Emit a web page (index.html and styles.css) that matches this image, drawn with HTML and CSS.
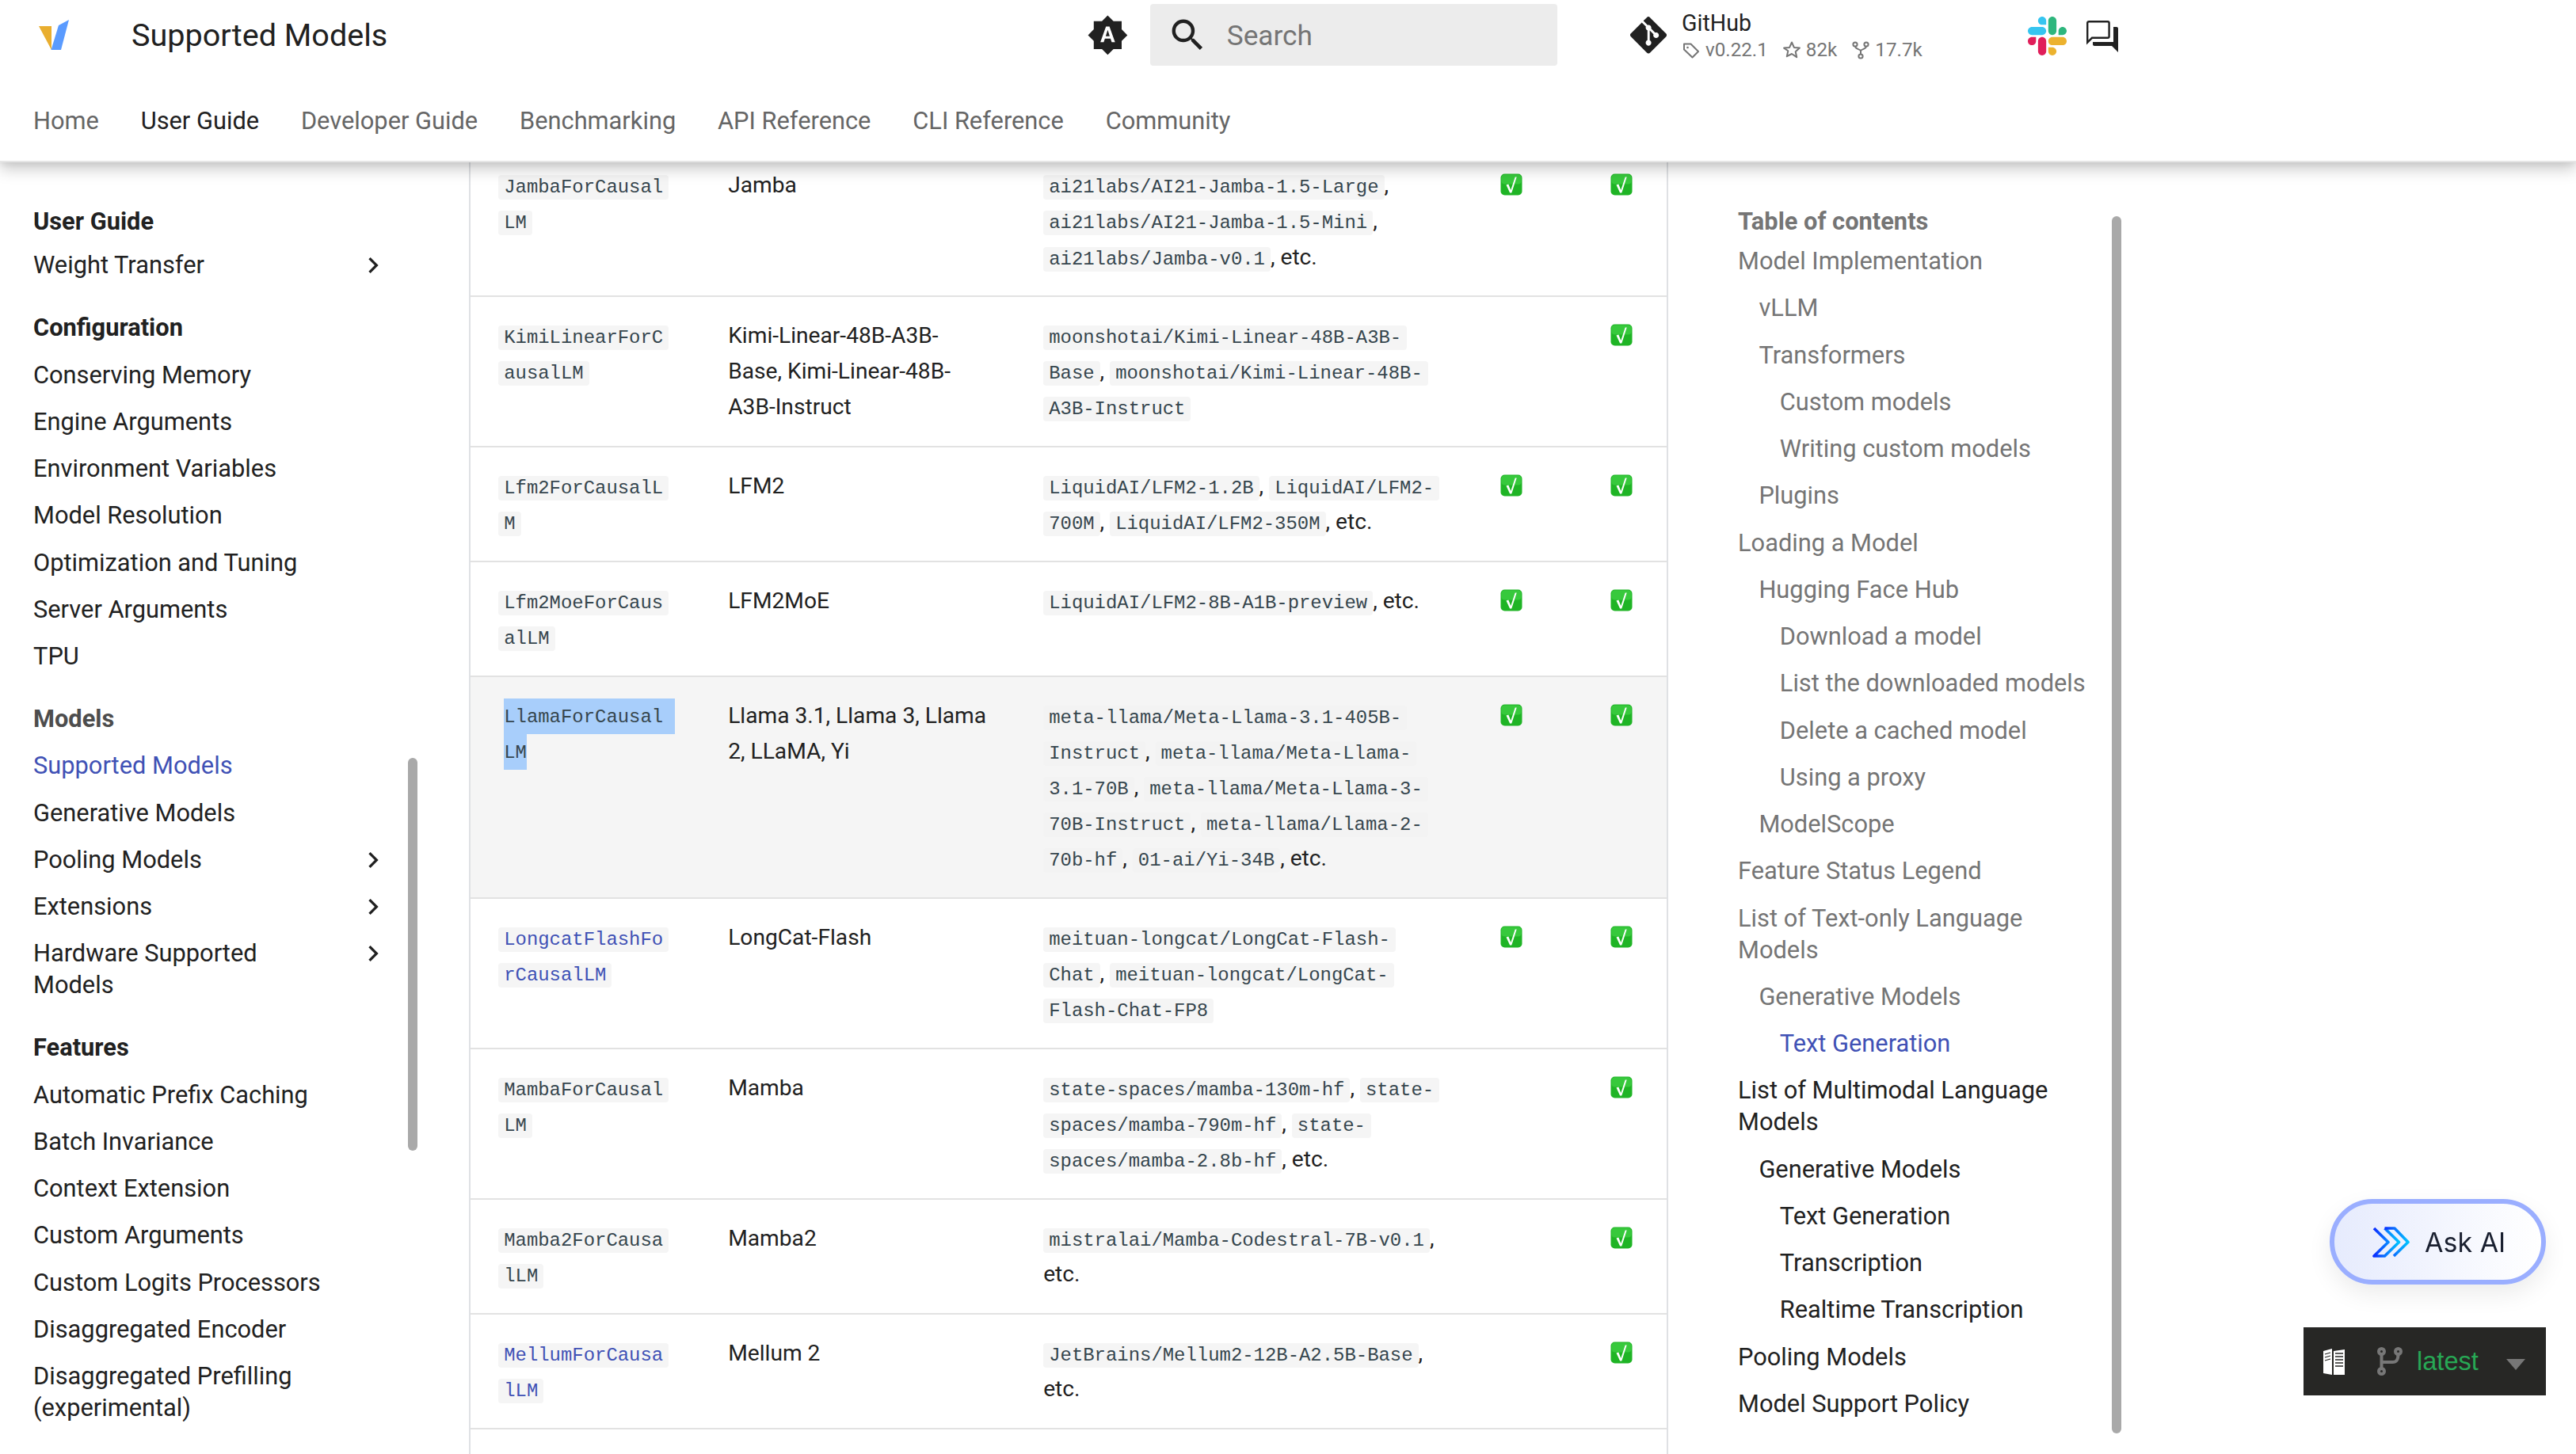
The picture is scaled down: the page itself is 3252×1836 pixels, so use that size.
FILE: index.html
```html
<!DOCTYPE html>
<html lang="en">
<head>
<meta charset="utf-8">
<title>Supported Models</title>
<link rel="stylesheet" href="styles.css">
</head>
<body>
<svg class="defs" aria-hidden="true">
  <symbol id="check" viewBox="0 0 28 28">
    <rect x="0.5" y="0.5" width="27" height="27" rx="5" fill="#1fb425"/>
    <rect x="1.5" y="1.5" width="25" height="12" rx="4" fill="#37c93c"/>
    <path d="M7.500 14.500l2.800-1 3 7.500 5.400-16.500h2l-6.400 20h-2.200z" fill="#fff"/>
  </symbol>
  <symbol id="chev" viewBox="0 0 24 24">
    <path d="M8.600 16.600 13.200 12 8.600 7.400 10 6l6 6-6 6z" fill="#212121"/>
  </symbol>
</svg>

<header class="site-header">
  <div class="bar">
    <svg class="logo" viewBox="42 0 53 88"><polygon points="49,33 65,33 65,63" fill="#e9ae2f"/><polygon points="64.500,63 74,32 87,25 77,63" fill="#5a9bff"/></svg>
    <div class="site-title">Supported Models</div>
    <svg class="scheme" viewBox="0 0 24 24"><path d="M14.300 16 13.600 14H10.400L9.700 16H7.800L11 7H13L16.200 16M20 8.690V4H15.310L12 .69 8.690 4H4V8.690L.69 12 4 15.310V20H8.690L12 23.310 15.310 20H20V15.310L23.310 12 20 8.690M10.850 12.650H13.150L12 9L10.850 12.650Z" fill="#212121"/></svg>
    <div class="search">
      <svg class="search-icon" viewBox="0 0 24 24"><path d="M9.500 3A6.500 6.500 0 0 1 16 9.500c0 1.610-.59 3.090-1.560 4.230l.27.27h.79l5 5-1.500 1.500-5-5v-.79l-.27-.27A6.516 6.516 0 0 1 9.500 16 6.500 6.500 0 0 1 3 9.500 6.500 6.500 0 0 1 9.500 3m0 2C7 5 5 7 5 9.500S7 14 9.500 14 14 12 14 9.500 12 5 9.500 5Z" fill="#212121"/></svg>
      <span class="search-text">Search</span>
    </div>
    <svg class="git" viewBox="0 0 448 512"><path d="M439.550 236.050L244 40.450a28.870 28.870 0 0 0-40.810 0l-40.660 40.630 51.520 51.520c27.060-9.140 52.680 16.770 43.390 43.680l49.660 49.660c34.230-11.800 61.180 31 35.470 56.690-26.490 26.490-70.210-2.870-56-37.340L240.220 199v121.850c25.300 12.540 22.260 41.850 9.080 55a34.340 34.340 0 0 1-48.550 0c-17.570-17.600-11.070-46.910 11.250-56v-123c-20.800-8.510-24.600-30.740-18.640-45L142.570 101 8.450 235.140a28.860 28.860 0 0 0 0 40.810l195.610 195.600a28.860 28.860 0 0 0 40.800 0l194.690-194.690a28.860 28.860 0 0 0 0-40.810z" fill="#212121"/></svg>
    <div class="repo">
      <div class="repo-name">GitHub</div>
      <div class="facts">
        <svg class="fact-icon" viewBox="0 0 24 24"><path d="M3 4.500h8.500l9.500 9.500-7.500 7.500L3 11.500z" fill="none" stroke="#757575" stroke-width="2" stroke-linejoin="round"/><circle cx="7.500" cy="9" r="1.300" fill="#757575"/></svg>
        <span class="fact">v0.22.1</span>
        <svg class="fact-icon star" viewBox="0 0 24 24"><path d="M12 2.500l2.900 6.400 7 .7-5.200 4.700 1.500 6.900L12 17l-6.200 3.200 1.500-6.900L2.100 9.600l7-.7z" fill="none" stroke="#757575" stroke-width="2" stroke-linejoin="round"/></svg>
        <span class="fact">82k</span>
        <svg class="fact-icon fork" viewBox="0 0 24 24"><g fill="none" stroke="#757575" stroke-width="2"><circle cx="5" cy="5" r="2.600"/><circle cx="19" cy="5" r="2.600"/><circle cx="12" cy="20" r="2.600"/><path d="M5 7.600c0 4 7 3 7 6v3.800M19 7.600c0 4-7 3-7 6"/></g></svg>
        <span class="fact">17.7k</span>
      </div>
    </div>
    <svg class="slack" viewBox="0 0 122.800 122.800">
      <path d="M25.800 77.600c0 7.100-5.800 12.900-12.900 12.900S0 84.700 0 77.600s5.800-12.900 12.900-12.900h12.900v12.900zM32.300 77.600c0-7.100 5.800-12.900 12.900-12.900s12.900 5.800 12.900 12.900v32.300c0 7.100-5.800 12.900-12.900 12.900s-12.900-5.800-12.900-12.900V77.600z" fill="#e01e5a"/>
      <path d="M45.200 25.800c-7.100 0-12.900-5.800-12.900-12.900S38.100 0 45.200 0s12.900 5.800 12.900 12.900v12.900H45.200zM45.200 32.300c7.100 0 12.900 5.800 12.900 12.900s-5.800 12.900-12.900 12.900H12.900C5.800 58.100 0 52.300 0 45.200s5.800-12.900 12.900-12.900h32.300z" fill="#36c5f0"/>
      <path d="M97 45.200c0-7.100 5.800-12.900 12.900-12.900s12.900 5.800 12.900 12.900-5.800 12.900-12.900 12.900H97V45.200zM90.500 45.200c0 7.100-5.800 12.900-12.900 12.900s-12.900-5.800-12.900-12.900V12.900C64.700 5.800 70.500 0 77.600 0s12.900 5.800 12.900 12.900v32.300z" fill="#2eb67d"/>
      <path d="M77.600 97c7.100 0 12.900 5.800 12.900 12.900s-5.800 12.900-12.900 12.900-12.900-5.800-12.900-12.900V97h12.900zM77.600 90.500c-7.100 0-12.900-5.800-12.900-12.900s5.800-12.900 12.900-12.900h32.300c7.100 0 12.900 5.800 12.900 12.900s-5.800 12.900-12.900 12.900H77.600z" fill="#ecb22e"/>
    </svg>
    <svg class="chat" viewBox="0 0 24 24"><path d="M3.600 2.600H15.400c.5 0 .9.4.9.9v8.500c0 .5-.4.9-.9.9H5.500L2.600 15.800V3.500c0-.5.4-.9 1-.9z" fill="none" stroke="#212121" stroke-width="1.200"/><path d="M19 6h2c.55 0 1 .45 1 1v15l-4-4H7c-.55 0-1-.45-1-1v-1.500h13z" fill="#212121"/></svg>
  </div>
  <nav class="tabs">
    <span class="tab">Home</span>
    <span class="tab tab-active">User Guide</span>
    <span class="tab">Developer Guide</span>
    <span class="tab">Benchmarking</span>
    <span class="tab">API Reference</span>
    <span class="tab">CLI Reference</span>
    <span class="tab">Community</span>
  </nav>
</header>

<main class="layout">
  <aside class="sidebar">
    <div class="nav-title">User Guide</div>
    <div class="nav-item nav-first"><span class="nav-text">Weight Transfer</span><svg class="chev"><use href="#chev"/></svg></div>

    <div class="nav-title nav-section">Configuration</div>
    <div class="nav-item"><span class="nav-text">Conserving Memory</span></div>
    <div class="nav-item"><span class="nav-text">Engine Arguments</span></div>
    <div class="nav-item"><span class="nav-text">Environment Variables</span></div>
    <div class="nav-item"><span class="nav-text">Model Resolution</span></div>
    <div class="nav-item"><span class="nav-text">Optimization and Tuning</span></div>
    <div class="nav-item"><span class="nav-text">Server Arguments</span></div>
    <div class="nav-item"><span class="nav-text">TPU</span></div>

    <div class="nav-title nav-section nav-title-soft">Models</div>
    <div class="nav-item nav-active"><span class="nav-text">Supported Models</span></div>
    <div class="nav-item"><span class="nav-text">Generative Models</span></div>
    <div class="nav-item"><span class="nav-text">Pooling Models</span><svg class="chev"><use href="#chev"/></svg></div>
    <div class="nav-item"><span class="nav-text">Extensions</span><svg class="chev"><use href="#chev"/></svg></div>
    <div class="nav-item"><span class="nav-text">Hardware Supported Models</span><svg class="chev"><use href="#chev"/></svg></div>

    <div class="nav-title nav-section">Features</div>
    <div class="nav-item"><span class="nav-text">Automatic Prefix Caching</span></div>
    <div class="nav-item"><span class="nav-text">Batch Invariance</span></div>
    <div class="nav-item"><span class="nav-text">Context Extension</span></div>
    <div class="nav-item"><span class="nav-text">Custom Arguments</span></div>
    <div class="nav-item"><span class="nav-text">Custom Logits Processors</span></div>
    <div class="nav-item"><span class="nav-text">Disaggregated Encoder</span></div>
    <div class="nav-item"><span class="nav-text">Disaggregated Prefilling (experimental)</span></div>
    <div class="thumb thumb-nav"></div>
  </aside>

  <section class="content">
    <table class="models">
      <colgroup><col class="c1"><col class="c2"><col class="c3"><col class="c4"><col class="c5"></colgroup>
      <tbody>
        <tr>
          <td><code class="cls">JambaForCausalLM</code></td>
          <td>Jamba</td>
          <td><code>ai21labs/AI21-Jamba-1.5-Large</code>, <code>ai21labs/AI21-Jamba-1.5-Mini</code>, <code>ai21labs/Jamba-v0.1</code>, etc.</td>
          <td><svg class="ok"><use href="#check"/></svg></td>
          <td><svg class="ok"><use href="#check"/></svg></td>
        </tr>
        <tr>
          <td><code class="cls">KimiLinearForCausalLM</code></td>
          <td>Kimi-Linear-48B-A3B-Base, Kimi-Linear-48B-A3B-Instruct</td>
          <td><code>moonshotai/Kimi-Linear-48B-A3B-Base</code>, <code>moonshotai/Kimi-Linear-48B-A3B-Instruct</code></td>
          <td></td>
          <td><svg class="ok"><use href="#check"/></svg></td>
        </tr>
        <tr>
          <td><code class="cls">Lfm2ForCausalLM</code></td>
          <td>LFM2</td>
          <td><code>LiquidAI/LFM2-1.2B</code>, <code>LiquidAI/LFM2-700M</code>, <code>LiquidAI/LFM2-350M</code>, etc.</td>
          <td><svg class="ok"><use href="#check"/></svg></td>
          <td><svg class="ok"><use href="#check"/></svg></td>
        </tr>
        <tr>
          <td><code class="cls">Lfm2MoeForCausalLM</code></td>
          <td>LFM2MoE</td>
          <td><code>LiquidAI/LFM2-8B-A1B-preview</code>, etc.</td>
          <td><svg class="ok"><use href="#check"/></svg></td>
          <td><svg class="ok"><use href="#check"/></svg></td>
        </tr>
        <tr class="hover">
          <td><div class="sel"><span class="sel-line">LlamaForCausal</span><span class="sel-line sel-short">LM</span></div></td>
          <td>Llama 3.1, Llama 3, Llama 2, LLaMA, Yi</td>
          <td><code>meta-llama/Meta-Llama-3.1-405B-Instruct</code>, <code>meta-llama/Meta-Llama-3.1-70B</code>, <code>meta-llama/Meta-Llama-3-70B-Instruct</code>, <code>meta-llama/Llama-2-70b-hf</code>, <code>01-ai/Yi-34B</code>, etc.</td>
          <td><svg class="ok"><use href="#check"/></svg></td>
          <td><svg class="ok"><use href="#check"/></svg></td>
        </tr>
        <tr>
          <td><code class="cls link">LongcatFlashForCausalLM</code></td>
          <td>LongCat-Flash</td>
          <td><code>meituan-longcat/LongCat-Flash-Chat</code>, <code>meituan-longcat/LongCat-Flash-Chat-FP8</code></td>
          <td><svg class="ok"><use href="#check"/></svg></td>
          <td><svg class="ok"><use href="#check"/></svg></td>
        </tr>
        <tr>
          <td><code class="cls">MambaForCausalLM</code></td>
          <td>Mamba</td>
          <td><code>state-spaces/mamba-130m-hf</code>, <code>state-spaces/mamba-790m-hf</code>, <code>state-spaces/mamba-2.8b-hf</code>, etc.</td>
          <td></td>
          <td><svg class="ok"><use href="#check"/></svg></td>
        </tr>
        <tr>
          <td><code class="cls">Mamba2ForCausalLM</code></td>
          <td>Mamba2</td>
          <td><code>mistralai/Mamba-Codestral-7B-v0.1</code>, etc.</td>
          <td></td>
          <td><svg class="ok"><use href="#check"/></svg></td>
        </tr>
        <tr>
          <td><code class="cls link">MellumForCausalLM</code></td>
          <td>Mellum 2</td>
          <td><code>JetBrains/Mellum2-12B-A2.5B-Base</code>, etc.</td>
          <td></td>
          <td><svg class="ok"><use href="#check"/></svg></td>
        </tr>
        <tr class="tail"><td></td><td></td><td></td><td></td><td></td></tr>
      </tbody>
    </table>
  </section>

  <aside class="toc">
    <div class="toc-title">Table of contents</div>
    <div class="toc-item">Model Implementation</div>
    <div class="toc-item l2">vLLM</div>
    <div class="toc-item l2">Transformers</div>
    <div class="toc-item l3">Custom models</div>
    <div class="toc-item l3">Writing custom models</div>
    <div class="toc-item l2">Plugins</div>
    <div class="toc-item">Loading a Model</div>
    <div class="toc-item l2">Hugging Face Hub</div>
    <div class="toc-item l3">Download a model</div>
    <div class="toc-item l3">List the downloaded models</div>
    <div class="toc-item l3">Delete a cached model</div>
    <div class="toc-item l3">Using a proxy</div>
    <div class="toc-item l2">ModelScope</div>
    <div class="toc-item">Feature Status Legend</div>
    <div class="toc-item">List of Text-only Language Models</div>
    <div class="toc-item l2">Generative Models</div>
    <div class="toc-item l3 toc-active">Text Generation</div>
    <div class="toc-item dark">List of Multimodal Language Models</div>
    <div class="toc-item l2 dark">Generative Models</div>
    <div class="toc-item l3 dark">Text Generation</div>
    <div class="toc-item l3 dark">Transcription</div>
    <div class="toc-item l3 dark">Realtime Transcription</div>
    <div class="toc-item dark">Pooling Models</div>
    <div class="toc-item dark">Model Support Policy</div>
    <div class="thumb thumb-toc"></div>
  </aside>
</main>

<button class="ask-ai">
  <svg class="ask-icon" viewBox="0 0 47 39">
    <defs><linearGradient id="askg" x1="0" y1="0" x2="1" y2="0"><stop offset="0" stop-color="#0b2cff"/><stop offset="0.55" stop-color="#0a86ff"/><stop offset="1" stop-color="#00c2ff"/></linearGradient></defs>
    <path d="M2 2 20 19.500 2 37H15.500L33.500 19.500 15.500 2" fill="none" stroke="url(#askg)" stroke-width="3.600" stroke-linejoin="round"/>
    <path d="M15.500 2H28L45 19.500 27 37" fill="none" stroke="url(#askg)" stroke-width="3.600" stroke-linejoin="round"/>
  </svg>
  <span class="ask-text">Ask AI</span>
</button>

<div class="version">
  <svg class="book" viewBox="0 0 27 33"><path d="M0 3 11 0V33L0 31zM13 3 27 1V33L13 33z" fill="#fff"/><path d="M2 7l7-2M2 11l7-2M2 15l7-2M15 6h10M15 10h10M15 14h10M15 18h10M15 22h10" stroke="#272725" stroke-width="1.300"/></svg>
  <svg class="branch" viewBox="0 0 32 36"><g fill="none" stroke="#777" stroke-width="4"><circle cx="5.500" cy="5.500" r="3.500"/><circle cx="26.500" cy="5.500" r="3.500"/><circle cx="5.500" cy="30.500" r="3.500"/><path d="M5.500 9v18M5.500 19h14c5 0 7-3 7-10"/></g></svg>
  <span class="version-text">latest</span>
  <span class="caret"></span>
</div>
</body>
</html>
```

FILE: styles.css
```css
* { box-sizing: border-box; }
html, body { margin: 0; height: 100%; overflow: hidden; }
body {
  width: 3252px;
  height: 1836px;
  background: #fff;
  color: #212121;
  font-family: Roboto, "Noto Sans", sans-serif;
  font-size: 30.8px;
}
.defs { position: absolute; width: 0; height: 0; }

/* header */
.site-header {
  position: relative;
  z-index: 3;
  height: 205px;
  background: #fff;
  border-bottom: 2px solid #e6e6e6;
  box-shadow: 0 0 9px rgba(0,0,0,.1), 0 9px 18px rgba(0,0,0,.2);
}
.bar {
  display: flex;
  align-items: center;
  height: 88px;
  padding-right: 574px;
}
.logo { width: 53px; height: 88px; margin-left: 42px; flex: none; }
.site-title { flex: 1; margin-left: 71px; padding-top: 1px; font-size: 39.6px; line-height: 88px; }
.scheme { width: 52.8px; height: 52.8px; margin-right: 27px; flex: none; }
.search {
  display: flex;
  align-items: center;
  width: 514px;
  height: 78px;
  background: #ececec;
  border-radius: 4px;
  padding-left: 21px;
  flex: none;
}
.search-icon { width: 52.8px; height: 52.8px; flex: none; }
.search-text { margin-left: 23px; padding-top: 1px; font-size: 35.2px; color: #757575; }
.git { width: 46px; height: 52.6px; margin-left: 92px; margin-right: 19px; flex: none; }
.repo { width: 437px; margin-top: 4px; flex: none; }
.repo-name { font-size: 28.6px; line-height: 34px; }
.facts { display: flex; align-items: center; height: 34px; color: #757575; font-size: 24.2px; }
.fact-icon { width: 24px; height: 24px; margin-right: 6px; flex: none; }
.star { margin-left: 18px; }
.fork { margin-left: 18px; }
.slack { width: 49px; height: 49px; margin-top: 2px; flex: none; }
.chat { width: 48px; height: 48px; margin-left: 21px; margin-top: 4px; flex: none; }

.tabs {
  display: flex;
  gap: 52.8px;
  padding: 45px 0 0 42px;
  line-height: 40px;
  color: #666;
}
.tab-active { color: #212121; }

/* layout */
.layout { display: flex; align-items: flex-start; }

.sidebar {
  position: relative;
  width: 592px;
  flex: none;
  padding: 55px 0 0 42px;
}
.nav-title { font-weight: 700; line-height: 40px; color: #212121; }
.nav-section { margin-top: 39px; }
.nav-title-soft { color: #4d4d4d; }
.nav-item {
  display: flex;
  justify-content: space-between;
  align-items: flex-start;
  width: 449px;
  margin-top: 19.25px;
  line-height: 40px;
}
.nav-first { margin-top: 15.25px; }
.nav-text { display: block; max-width: 385px; }
.nav-active { color: #4051b5; }
.chev { width: 40px; height: 40px; flex: none; }

.thumb { position: absolute; background: #a9a9a9; border-radius: 6px; width: 12px; }
.thumb-nav { left: 515px; top: 752px; height: 496px; }
.thumb-toc { left: 560px; top: 68px; height: 1537px; }

/* table */
.content { width: 1514px; flex: none; }
.models {
  width: 1514px;
  margin-top: -22px;
  table-layout: fixed;
  border-collapse: separate;
  border-spacing: 0;
  border-left: 2px solid #dfe1e4;
  border-right: 2px solid #dfe1e4;
  font-size: 28.16px;
  line-height: 45.06px;
}
.c1 { width: 290px; }
.c2 { width: 398px; }
.c3 { width: 576px; }
.c4 { width: 139px; }
.c5 { width: 107px; }
.models td {
  padding: 26.4px 35.2px;
  vertical-align: top;
  border-top: 2px solid #e2e2e2;
  word-break: break-word;
}
.hover td { background: #f5f5f5; }
.tail td { height: 60px; padding: 0; }

code {
  font-family: "Liberation Mono", monospace;
  font-size: 23.936px;
  line-height: 1;
  color: #36464e;
  background: #f5f5f5;
  padding: 2px 7px;
  border-radius: 4px;
  -webkit-box-decoration-break: clone;
  box-decoration-break: clone;
}
.hover code { background: #f3f3f3; }
.cls { word-break: break-all; }
.link { color: #4051b5; }
.sel { margin-left: 7px; padding-top: 1px; font-family: "Liberation Mono", monospace; font-size: 23.936px; color: #36464e; }
.sel-line { display: block; width: 216px; height: 45px; line-height: 47px; background: #a8cefb; }
.sel-short { width: 29px; }
.ok { display: block; width: 28px; height: 28px; margin-top: 7.5px; margin-left: 1px; }

/* table of contents */
.toc {
  position: relative;
  width: 1146px;
  flex: none;
  padding: 55px 0 0 88px;
  color: #757575;
}
.toc-title { font-weight: 700; line-height: 40px; }
.toc-item { width: 446px; margin-top: 19.25px; line-height: 40px; }
.toc-title + .toc-item { margin-top: 10px; }
.l2 { padding-left: 26.4px; }
.l3 { padding-left: 52.8px; }
.toc-active { color: #4051b5; }
.dark { color: #212121; }

/* floating widgets */
.ask-ai {
  position: fixed;
  right: 38px;
  bottom: 214px;
  display: flex;
  align-items: center;
  width: 273px;
  height: 108px;
  padding: 0 0 0 48px;
  border: 6px solid #9aaeff;
  border-radius: 54px;
  background: linear-gradient(90deg, #e6ebfd, #fff);
  box-shadow: 0 12px 30px rgba(0,0,0,.08);
}
.ask-icon { width: 47px; height: 39px; flex: none; }
.ask-text { margin-left: 19px; font-family: Inter, sans-serif; font-size: 34px; color: #1a2030; }

.version {
  position: fixed;
  right: 38px;
  bottom: 74px;
  display: flex;
  align-items: center;
  width: 306px;
  height: 86px;
  padding-left: 25px;
  background: #272725;
}
.book { width: 27px; height: 33px; flex: none; }
.branch { width: 32px; height: 36px; margin-left: 41px; flex: none; }
.version-text { margin-left: 18px; padding-bottom: 1px; font-family: "Liberation Sans", Arial, sans-serif; font-size: 32.6px; color: #27a855; }
.caret {
  margin-left: 35px;
  margin-top: 8px;
  border-left: 12px solid transparent;
  border-right: 12px solid transparent;
  border-top: 14px solid #777;
}
```
